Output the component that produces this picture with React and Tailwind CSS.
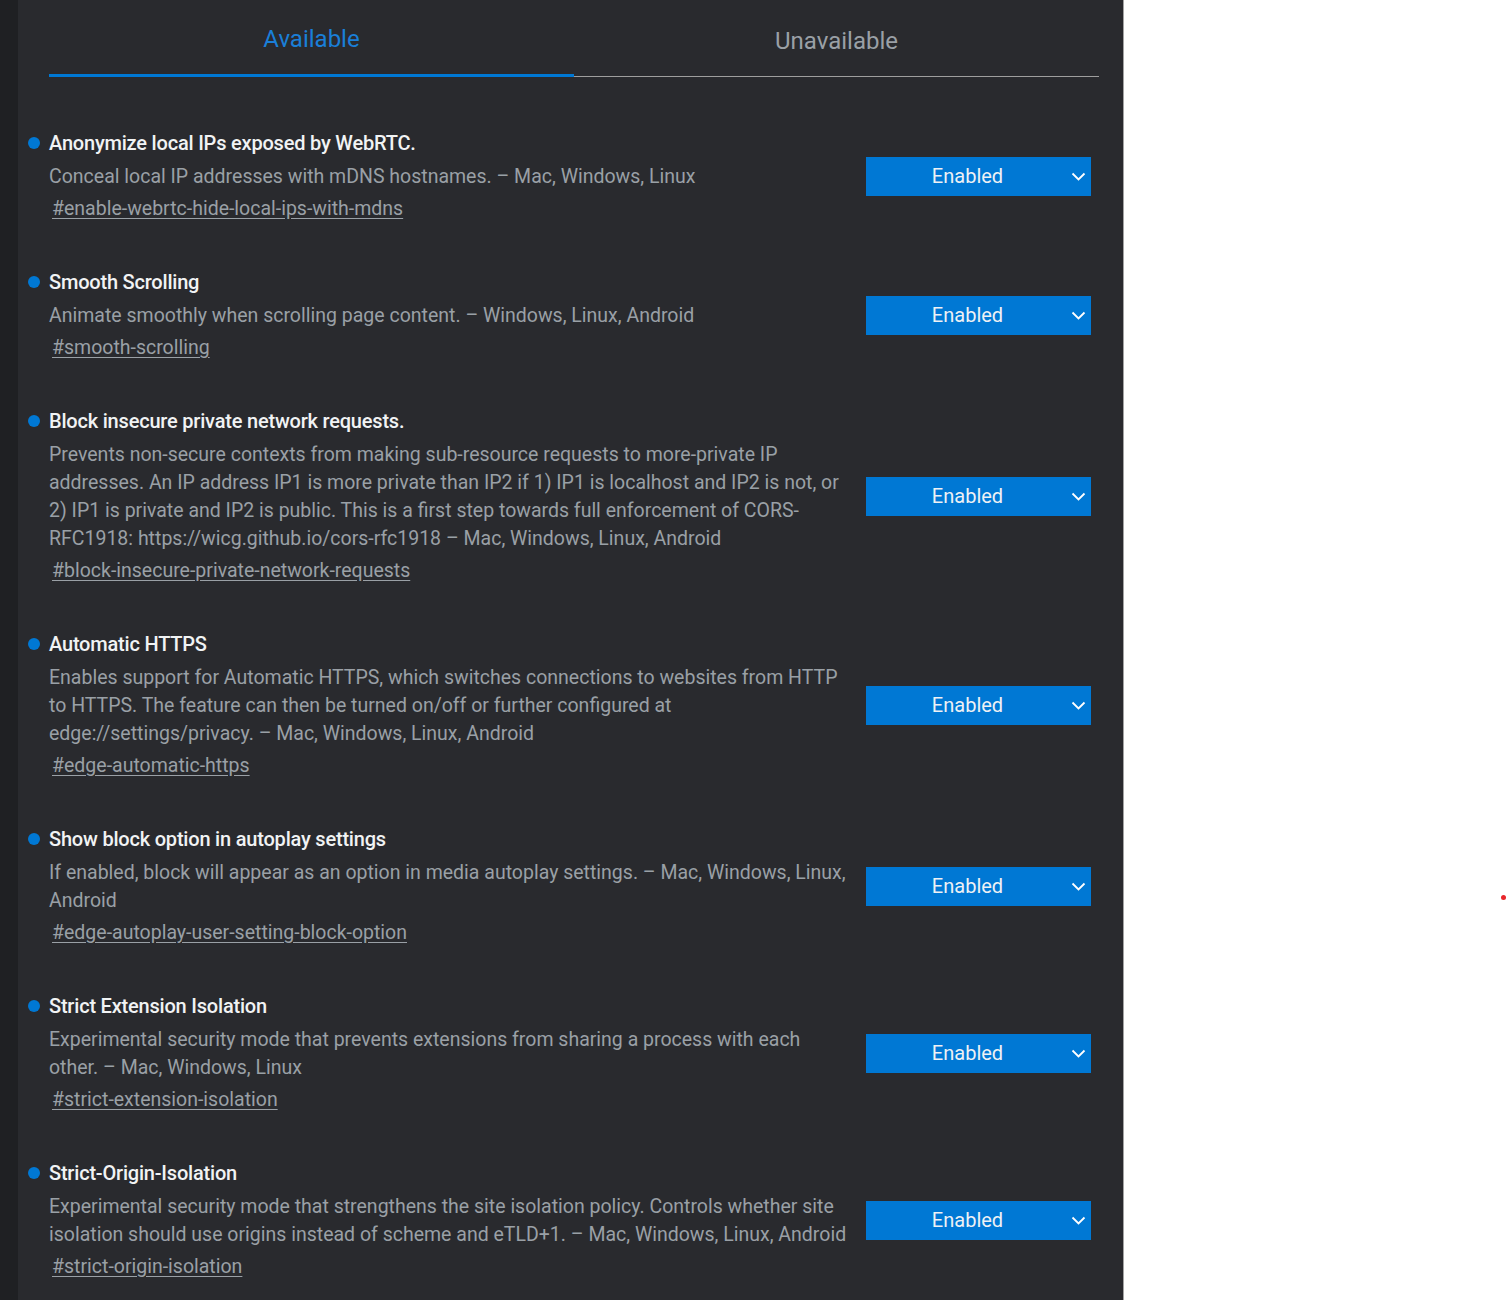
import React from "react";

const flags = [
  {
    title: "Anonymize local IPs exposed by WebRTC.",
    desc: "Conceal local IP addresses with mDNS hostnames. – Mac, Windows, Linux",
    tag: "#enable-webrtc-hide-local-ips-with-mdns",
  },
  {
    title: "Smooth Scrolling",
    desc: "Animate smoothly when scrolling page content. – Windows, Linux, Android",
    tag: "#smooth-scrolling",
  },
  {
    title: "Block insecure private network requests.",
    desc: "Prevents non-secure contexts from making sub-resource requests to more-private IP addresses. An IP address IP1 is more private than IP2 if 1) IP1 is localhost and IP2 is not, or 2) IP1 is private and IP2 is public. This is a first step towards full enforcement of CORS-RFC1918: https://wicg.github.io/cors-rfc1918 – Mac, Windows, Linux, Android",
    tag: "#block-insecure-private-network-requests",
  },
  {
    title: "Automatic HTTPS",
    desc: "Enables support for Automatic HTTPS, which switches connections to websites from HTTP to HTTPS. The feature can then be turned on/off or further configured at edge://settings/privacy. – Mac, Windows, Linux, Android",
    tag: "#edge-automatic-https",
  },
  {
    title: "Show block option in autoplay settings",
    desc: "If enabled, block will appear as an option in media autoplay settings. – Mac, Windows, Linux, Android",
    tag: "#edge-autoplay-user-setting-block-option",
  },
  {
    title: "Strict Extension Isolation",
    desc: "Experimental security mode that prevents extensions from sharing a process with each other. – Mac, Windows, Linux",
    tag: "#strict-extension-isolation",
  },
  {
    title: "Strict-Origin-Isolation",
    desc: "Experimental security mode that strengthens the site isolation policy. Controls whether site isolation should use origins instead of scheme and eTLD+1. – Mac, Windows, Linux, Android",
    tag: "#strict-origin-isolation",
  },
];

const Chevron = () => (
  <svg width="15" height="9" viewBox="0 0 15 9" fill="none">
    <path d="M1.5 1.5 L7.5 7.5 L13.5 1.5" stroke="#ffffff" strokeWidth="1.8" />
  </svg>
);

const FlagRow = ({ flag }) => (
  <div className="flex items-center pl-[10px] pr-[32px] mb-[45px]">
    <div className="w-[823px]">
      <div className="flex items-center h-[28px]">
        <span className="w-[12px] h-[12px] rounded-full bg-[#0078d4] mr-[9px]"></span>
        <span className="text-[20px] leading-[28px] font-medium text-[#f1f3f4] tracking-[-0.2px]">{flag.title}</span>
      </div>
      <div className="ml-[21px] mt-[6px] text-[19.5px] leading-[28px] text-[#9aa0a6]">{flag.desc}</div>
      <div className="ml-[24px] mt-[4px] text-[19.5px] leading-[28px] text-[#9aa0a6] underline underline-offset-[3px]">{flag.tag}</div>
    </div>
    <div className="ml-auto w-[225px] h-[39px] bg-[#0078d4] flex items-center relative">
      <span className="w-full text-center pr-[22px] text-[20px] leading-[37px] text-[#eef1f5]">Enabled</span>
      <span className="absolute right-[5px] top-[15px] flex"><Chevron /></span>
    </div>
  </div>
);

export default function App() {
  return (
    <div className="flex h-[1300px] overflow-hidden" style={{ fontFamily: "Roboto, 'Noto Sans', sans-serif" }}>
      <div className="w-[18px] bg-[#1f2023]"></div>
      <div className="w-[1106px] bg-[#292a2e] border-r border-[#a3a3a3]">
        <div className="flex ml-[31px] mr-[24px]">
          <div className="flex-1 h-[77px] border-b-[3px] border-[#0078d4] text-center pt-[24px] text-[24px] leading-[30px] text-[#1a7fd8]">Available</div>
          <div className="flex-1 h-[77px] border-b border-[#9e9e9e] text-center pt-[26px] text-[24px] leading-[30px] text-[#9aa0a6]">Unavailable</div>
        </div>
        <div className="pt-[52px]">
          {flags.map((f) => (
            <FlagRow key={f.tag} flag={f} />
          ))}
        </div>
      </div>
      <div className="flex-1 bg-white relative">
        <span className="absolute left-[377px] top-[895px] w-[5px] h-[5px] rounded-full bg-[#e8262b]"></span>
      </div>
    </div>
  );
}
